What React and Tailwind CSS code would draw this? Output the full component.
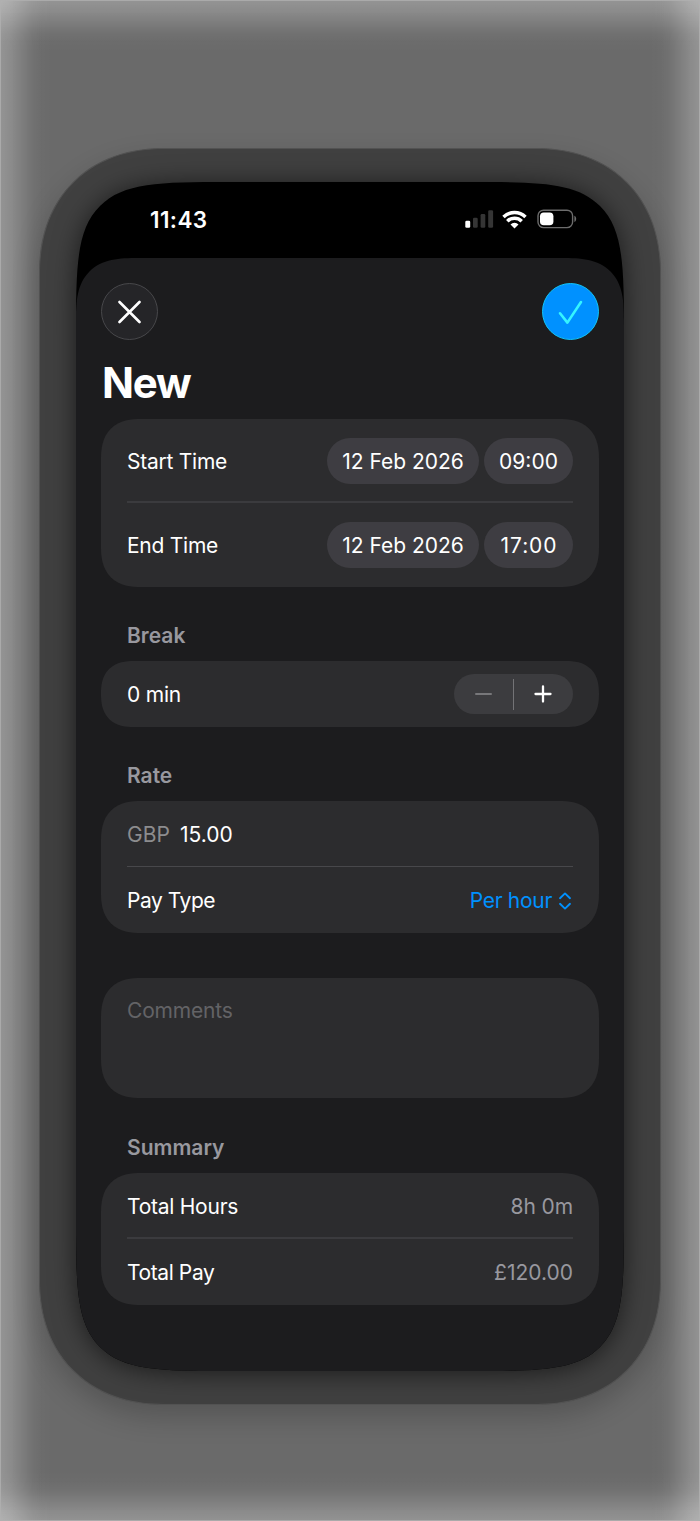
import React, { useState } from 'react';

const Card = ({ className = '', children }) => (
  <div
    className={`mx-[25px] rounded-[40px] bg-[#2c2c2e] px-[26px] [corner-shape:superellipse(1.3)] ${className}`}
  >
    {children}
  </div>
);

const SectionTitle = ({ className = '', children }) => (
  <h2
    className={`flex items-center pl-[51px] text-[21px] font-semibold text-[#98989f] ${className}`}
  >
    {children}
  </h2>
);

const Pill = ({ className = '', children }) => (
  <button
    className={`flex h-[46px] items-center justify-center rounded-full bg-[#3e3d42] pt-px ${className}`}
  >
    {children}
  </button>
);

const SignalIcon = () => (
  <svg width="29" height="18" viewBox="0 0 29 18">
    <rect x="0.3" y="10.8" width="4.9" height="7" rx="1.3" fill="#fff" />
    <rect x="8" y="7.8" width="4.7" height="10" rx="1.3" fill="#353535" />
    <rect x="15.6" y="4" width="4.7" height="13.8" rx="1.3" fill="#353535" />
    <rect x="23.2" y="0.3" width="4.9" height="17.5" rx="1.3" fill="#353535" />
  </svg>
);

const WifiIcon = () => (
  <svg width="25" height="19" viewBox="0 0 25 19" fill="none" stroke="#fff" strokeWidth="3.5">
    <path d="M1.5 7a15.8 15.8 0 0 1 22 0" />
    <path d="M5.3 11.2a10.2 10.2 0 0 1 14.4 0" />
    <path d="M12.5 18.5l-4-4.1a5.7 5.7 0 0 1 8 0z" fill="#fff" stroke="none" />
  </svg>
);

const BatteryIcon = () => (
  <svg width="40" height="20" viewBox="0 0 40 20">
    <rect x="1" y="1.2" width="34.6" height="17.4" rx="5.6" fill="none" stroke="#6c6c6c" strokeWidth="1.4" />
    <rect x="3" y="3.4" width="13.4" height="12.8" rx="3.8" fill="#fff" />
    <path d="M37.4 6.8c2.4 1.2 2.4 5 0 6.2z" fill="#6c6c6c" />
  </svg>
);

const TimeRow = ({ label, date, time, timeClass = '', className = '' }) => (
  <div className={`flex items-center ${className}`}>
    <span className="flex-1 pt-px tracking-[-0.25px]">{label}</span>
    <Pill className="mr-[5px] w-[152px]">{date}</Pill>
    <Pill className={`w-[89px] ${timeClass}`}>{time}</Pill>
  </div>
);

const StatusBar = () => (
  <div className="flex h-[76px] items-center pl-[74px] pr-[47.5px]">
    <span className="flex-1 text-[22.5px] font-semibold tracking-[0.4px]">11:43</span>
    <div className="flex items-center pb-[2px]">
      <SignalIcon />
      <span className="ml-[8px]">
        <WifiIcon />
      </span>
      <span className="ml-[10px]">
        <BatteryIcon />
      </span>
    </div>
  </div>
);

const App = () => {
  const [minutes, setMinutes] = useState(0);

  return (
    <div
      className="relative flex h-[1521px] w-[700px] justify-center overflow-hidden bg-[#6a6a6a] pt-[148px] text-[21px] text-white"
      style={{ fontFamily: 'Inter, "Liberation Sans", sans-serif' }}
    >
      {/* Light along the edges of the backdrop */}
      <div className="pointer-events-none absolute inset-0 border border-[#b0b0b0]/80 bg-[linear-gradient(to_right,rgba(255,255,255,0.28)_0px,rgba(255,255,255,0.225)_10px,rgba(255,255,255,0.14)_20px,rgba(255,255,255,0.055)_31px,rgba(255,255,255,0.015)_40px,transparent_50px,transparent_650px,rgba(255,255,255,0.015)_660px,rgba(255,255,255,0.055)_669px,rgba(255,255,255,0.14)_680px,rgba(255,255,255,0.225)_690px,rgba(255,255,255,0.28)_700px),linear-gradient(to_bottom,rgba(255,255,255,0.28)_0px,rgba(255,255,255,0.225)_10px,rgba(255,255,255,0.14)_20px,rgba(255,255,255,0.055)_31px,rgba(255,255,255,0.015)_40px,transparent_50px,transparent_1471px,rgba(255,255,255,0.015)_1481px,rgba(255,255,255,0.055)_1490px,rgba(255,255,255,0.14)_1501px,rgba(255,255,255,0.225)_1511px,rgba(255,255,255,0.28)_1521px)]" />

      {/* Bezel */}
      <div className="relative h-[1257px] w-[622px] rounded-[125px] border border-[#525252] bg-[#404040] px-[36px] pt-[33px] shadow-[0_12px_28px_rgba(0,0,0,0.2)] [corner-shape:superellipse(1.13)]">
        <div className="h-[1189px] w-[548px] overflow-hidden rounded-[165px] bg-black shadow-[0_2px_26px_rgba(0,0,0,0.6)] [corner-shape:superellipse(2.14)]">
          <StatusBar />

          {/* Sheet */}
          <div className="h-[1113px] rounded-t-[62px] bg-[#1c1c1e] pt-[25px] [corner-shape:superellipse(1.5)]">
            <header className="flex justify-between px-[25px]">
              <button className="flex size-[57px] items-center justify-center rounded-full border border-[#48484b] bg-[#252528]">
                <svg width="24" height="24" viewBox="0 0 24 24" fill="none" stroke="#fff" strokeWidth="2.6" strokeLinecap="round">
                  <path d="M1.5 2l20 20M21.5 2l-20 20" />
                </svg>
              </button>
              <button className="flex size-[57px] items-center justify-center rounded-full border-[1.5px] border-[#12c4f8] bg-[#0091ff]">
                <svg width="26" height="26" viewBox="0 0 26 26" fill="none" stroke="#35f4ff" strokeWidth="2.6" strokeLinecap="round" strokeLinejoin="round">
                  <path d="M2 14.3l7.4 9.3L23 3" />
                </svg>
              </button>
            </header>

            <h1 className="h-[79px] pl-[26px] pt-[7px] text-[42px] font-bold leading-[72px] tracking-[-1.2px]">New</h1>

            <Card className="h-[168px]">
              <TimeRow className="h-[82px] pt-[2px]" label="Start Time" date="12 Feb 2026" time="09:00" />
              <div className="h-[2px] bg-[#3b3b3e]" />
              <TimeRow
                className="h-[84px]"
                label="End Time"
                date="12 Feb 2026"
                time="17:00"
                timeClass="pl-px tracking-[0.9px]"
              />
            </Card>

            <SectionTitle className="h-[74px] pt-[23px]">Break</SectionTitle>
            <Card className="flex h-[66px] items-center justify-between">
              <span className="pt-[2px] tracking-[-0.2px]">{minutes} min</span>
              <div className="flex h-[40px] w-[119px] items-center rounded-full bg-[#3c3c3f]">
                <button
                  className="flex w-[59px] justify-center"
                  onClick={() => setMinutes(Math.max(0, minutes - 5))}
                >
                  <span className="h-[2px] w-[17px] rounded-full bg-[#77777a]" />
                </button>
                <div className="h-[31px] w-px bg-[#737376]" />
                <button className="flex flex-1 justify-center pr-px" onClick={() => setMinutes(minutes + 5)}>
                  <svg width="18" height="18" viewBox="0 0 18 18" stroke="#fff" strokeWidth="2.3" strokeLinecap="round">
                    <path d="M9 1.5v15M1.5 9h15" />
                  </svg>
                </button>
              </div>
            </Card>

            <SectionTitle className="h-[74px] pt-[23px]">Rate</SectionTitle>
            <Card className="h-[132px]">
              <div className="flex h-[65px] items-center pt-[2px]">
                <span className="w-[53px] text-[#8c8c8e]">GBP</span>
                <span>15.00</span>
              </div>
              <div className="h-px bg-[#48484b]" />
              <div className="flex h-[66px] items-center pt-[2px]">
                <span className="flex-1 tracking-[-0.45px]">Pay Type</span>
                <span className="tracking-[-0.3px] text-[#0091ff]">Per hour</span>
                <svg className="ml-[6px] mr-[1px]" width="14" height="18" viewBox="0 0 14 18" fill="none" stroke="#0091ff" strokeWidth="1.9" strokeLinecap="round" strokeLinejoin="round">
                  <path d="M2 6.2L7 1.4l5 4.8M2 11.8l5 4.8 5-4.8" />
                </svg>
              </div>
            </Card>

            <Card className="mt-[45px] h-[120px] pt-[17px] tracking-[-0.2px] text-[#636366]">Comments</Card>

            <SectionTitle className="h-[75px] pt-[24px]">Summary</SectionTitle>
            <Card className="h-[132px]">
              <div className="flex h-[64px] items-center justify-between pt-[3px]">
                <span className="tracking-[-0.25px]">Total Hours</span>
                <span className="tracking-[-0.1px] text-[#98989f]">8h 0m</span>
              </div>
              <div className="h-[2px] bg-[#3b3b3e]" />
              <div className="flex h-[66px] items-center justify-between pt-[2px]">
                <span className="tracking-[-0.4px]">Total Pay</span>
                <span className="text-[#98989f]">£120.00</span>
              </div>
            </Card>
          </div>
        </div>
      </div>
    </div>
  );
};

export default App;
